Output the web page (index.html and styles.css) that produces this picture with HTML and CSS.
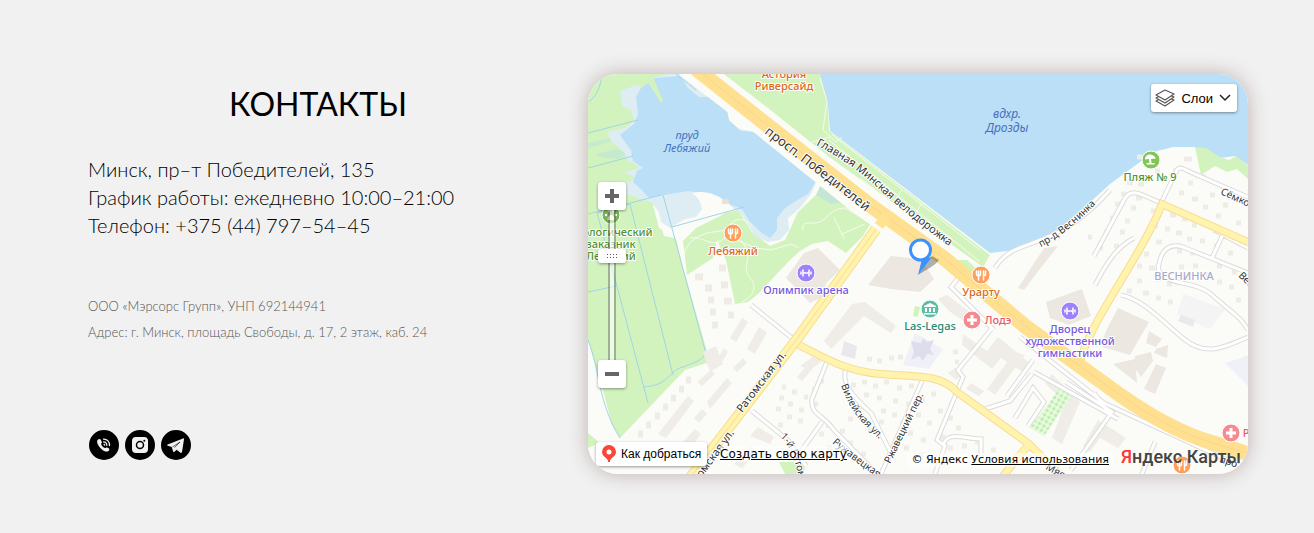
FILE: index.html
```html
<!DOCTYPE html>
<html lang="ru">
<head>
    <meta charset="UTF-8">
    <meta name="viewport" content="width=device-width, initial-scale=1.0">
    <title>Контакты</title>
    <link rel="stylesheet" href="styles.css">
</head>
<body>
    <section class="contacts">
        <div class="info">
            <h1>КОНТАКТЫ</h1>
            <div class="main-text">
                <p>Минск, пр–т Победителей, 135</p>
                <p>График работы: ежедневно 10:00–21:00</p>
                <p>Телефон: +375 (44) 797–54–45</p>
            </div>
            <div class="legal">
                <p>ООО «Мэрсорс Групп», УНП 692144941</p>
                <p>Адрес: г. Минск, площадь Свободы, д. 17, 2 этаж, каб. 24</p>
            </div>
            <div class="social">
                <a href="#phone" aria-label="Телефон">
                    <svg viewBox="0 0 30 30">
                        <path fill="#f1f1f1" d="M9 9.5c1-.8 2.3-.8 2.8.2l1.1 2.2c.3.8-.8 1.3-.8 2.1.2 1.4 2.4 3.8 3.9 4.1.8 0 1.3-1 2.1-.6l1.9 1c.6.5.3 1.9-.5 2.5-1.7 1.2-4.4.4-7.1-2.1C9 15.900 6.800 11.300 9 9.500z"/>
                        <path fill="none" stroke="#f1f1f1" stroke-width="1.300" stroke-linecap="round" d="M14.500 9.200c3.600-.2 6.300 2.600 6 6.300M14.600 11.900c2 0 3.300 1.400 3.200 3.400M15 14.300c.5 0 .7.300.7.700"/>
                    </svg>
                </a>
                <a href="#instagram" aria-label="Instagram">
                    <svg viewBox="0 0 30 30">
                        <rect x="7" y="7" width="16" height="16" rx="4" fill="#f1f1f1"/>
                        <circle cx="15" cy="15" r="3.500" fill="none" stroke="#000" stroke-width="1.500"/>
                        <circle cx="19.300" cy="10.800" r="1" fill="#000"/>
                    </svg>
                </a>
                <a href="#telegram" aria-label="Telegram">
                    <svg viewBox="0 0 30 30">
                        <path fill="#f1f1f1" d="M22 8.400 6.700 14.600c-.7.300-.6.900.1 1.100l3.900 1.200 1.500 4.700c.3.700.8.700 1.300.2l2.100-2.100 4 3c.6.400 1.200.1 1.400-.6L23 9.300c.1-.8-.3-1.200-1-.9z"/>
                        <path fill="none" stroke="#000" stroke-width=".6" d="m11.500 17 7.500-5-5.500 5.600"/>
                    </svg>
                </a>
            </div>
        </div>

        <div class="map">
            <svg class="map-canvas" viewBox="588 74 660 400" preserveAspectRatio="xMidYMid slice">
                <defs>
                    <path id="t-pob" d="M764 133 Q790 153 815 172 T886 228"/>
                    <path id="t-velo" d="M816 145 Q850 162 880 190 T960 254"/>
                    <path id="t-rat" d="M742 413 L800 337"/>
                    <path id="t-rat2" d="M695 487 L752 409"/>
                    <path id="t-vil" d="M841 385 Q850 410 862 422 T890 450"/>
                    <path id="t-rzh" d="M890 464 L928 386"/>
                    <path id="t-ruz" d="M832 443 Q852 460 884 482"/>
                    <path id="t-one" d="M780 437 Q795 450 800 486"/>
                    <path id="t-ves" d="M1041 247 Q1063 237 1100 200"/>
                    <path id="t-sem" d="M1220 194 L1260 212"/>
                    <path id="t-mya" d="M1045 469 L1080 488"/>
                    <pattern id="trees" width="5" height="5" patternUnits="userSpaceOnUse" patternTransform="rotate(30)">
                        <circle cx="2" cy="2" r="1.700" fill="#b9ecab"/>
                    </pattern>
                </defs>
                <rect x="588" y="74" width="660" height="400" fill="#fbfcf7"/>

                <!-- парки -->
                <g fill="#d3f3be">
                    <path d="M588 74H690L700 100 660 198 653 205 659 228 676 239 682 264 710 362 685 370 620 438 612 425 604 394 588 340z"/>
                    <path d="M683 240 700 222 718 214 738 210 752 232 770 246 785 240 798 212 818 193 838 200 871 223 863 236 846 253 828 241 812 244 800 251 790 260 758 294 748 302 735 304 726 260 717 240 713 258 687 275z"/>
                    <path d="M713 74H820L828 105 829 131 990 255 983 267z"/>
                    <path d="M956 260 967 260 990 280 982 282z"/>
                    <path d="M915 306 920 307 918 317 913 316z"/>
                    <path d="M779 462h28l-4 12h-18z"/>
                    <path d="M588 433 600 443 588 448z"/>
                    <path d="M1248 356c-8 0-11 8-8 16l8 12z"/>
                </g>

                <!-- вода -->
                <path fill="#c4ead0" d="m588 143 24-5-2 4-22 6zM596 154l20-5 12 5-10 5-18-2z"/>
                <path fill="#fbfcf7" d="m655 203 5-10 40-4 40 14-20 13-24 12-12 12-20-4z"/>
                <path fill="#deecf3" d="M620 91 636 85 645 88 655 77 668 74H690L698 88 712 97 727 110 730 127 745 130 757 133 768 145 783 147 800 165 818 178 811 194 800 208 788 218 789 230 780 240 768 242 755 236 742 215 727 203 712 198 703 208 696 217 685 219 670 228 661 222 659 212 652 203 635 197 622 193 618 188 636 178 624 172 640 168 627 160 624 152 612 142 607 132 625 128 634 120 631 110 622 106z"/>
                <path fill="#badff6" d="M641 88 655 78 680 76 688 88 699 97 714 97 727 110 729 120 741 131 757 132 764 141 783 150 802 168 816 181 808 194 799 199 785 208 777 218 777 230 770 238 762 233 750 222 742 209 726 203 708 194 688 191 670 194 649 198 641 189 633 182 637 171 643 168 633 161 631 150 625 142 620 135 634 124 638 114 636 97z"/>
                <path fill="#d3f3be" d="m646 79 7-2 10 24-2 2z"/>
                <path fill="#fbfcf7" d="M692 193c12-3 24 0 38 11l-6 8-24 6c4-8 2-18-8-25z"/>
                <path fill="#c4e6d4" d="m820 186 20 8 1 8-10 2-15-9z"/>
                <path fill="#e8e1d6" d="M722 199h7v5h-7z"/>
                <path fill="#badff6" d="M820 74 828 105 830 131 990 253 1008 251 1037 242 1060 228 1085 207 1110 184 1140 162 1157 151 1173 147 1195 147 1220 158 1235 156 1248 165V74z"/>
                <path fill="#d3f3be" d="m1195 147 11 1 14 9 9 3 7-4 12 10v13l-11-10-10 3-12-6-14 9z"/>
                <path class="river" d="M602 74c-1 12-6 24-14 28M588 133l50-13M588 168l45-12M588 214l73-19M597 213l13 47 38 143M597 213l33-9M630 204l43 171M663 195l42 155c1 10-10 12-22 17-14 3-14 19-40 20M588 292l28-6M588 340c12 30 10 63 32 98M672 227l72-20M676 74l20 16"/>

                <!-- дома -->
                <g fill="#ece7e0">
                    <path d="M804 253 818 248 840 270 826 283 824 296 810 303 786 278z"/>
                    <path d="m868 285 23-29 30 3 13 20-14 13-29-3z"/>
                    <path d="M1046 302 1082 289 1091 316 1069 325 1050 318z"/>
                    <path d="m1118 308 31 14-19 33-28-8 3-14z"/>
                    <path d="m1149 331 13 8-6 8-10-4zM1156 349l12-4-1 13-13-5zM1135 356l16-4 2 9-12 16-7-10zM1156 364l10 4-11 26-11-5zM1113 364l22-5 2 24z"/>
                    <path d="m1018 288 26-40 14-2-22 28-12 16z"/>
                </g>
                <g fill="#f0ece8">
                    <path d="m730 338 12-20 6 4-12 20zM747 349l12-22 8 5-12 22zM718 358l6-10 4 4-6 10zM733 368l10-10 4 5-10 9z"/>
                    <path d="m707 402 20-24 5 5-22 26zM658 434l30-38 6 5-28 37zM697 382l14-12 4 4-13 12zM683 442l12-13 6 5-9 12zM694 418l8-9 5 5-8 9z"/>
                    <path d="m750 436 8-9 16 10-4 7zM750 446l-16 18 8 4 14-16zM797 377l12-14 5 4-12 14zM800 366l14-10 8 5-12 9z"/>
                    <path d="m824 341 28-37 13-2 31 24-5 7-27-17-33 33zM938 299l9-4 24 18-4 10-18-12z"/>
                    <path d="m963 334 24 17 11-14 33 27-8 8-22-14-9 11-30-24zM1052 374l28 28-18 42-10-6 13-35-20-20zM1025 355l-30 40-8-6 28-37zM1098 420l28 18-8 10-18-10-10 14-7-6z"/>
                    <path d="m948 373 7-5 8 7-7 5zM971 383l13 8-5 5-13-7zM703 352l13-6 7 18-13 8z"/>
                </g>
                <g fill="#e9e9ed">
                    <path d="m915 333 28 16-14 20-26-4z" fill="#f0f0f8"/>
                    <path d="m911 341 10 2 2-5 4 4 7-2-4 9 4 6-7-1-4 7-4-5-8 4 3-8z" fill="#deddec"/>
                    <path d="m844 341 13 5-2 13-14-4z"/>
                    <path d="m1183 294 42 15-15 20-33-14z" fill="#f4f4f4"/>
                    <path d="m1181 315 14 5-2 7-15-6z"/>
                    <path d="m1225 363 23-7v30z" fill="#f0f0f8"/>
                </g>
                <path class="blocks" d="M695 277h8M705 288h7M708 300h6M710 312h6M712 325h6M719 268h7M721 285h7M724 301h8M728 315h6M686 380h5M679 389h5M671 398h5M663 407h5M655 416h5M646 425h5M638 434h5"/>
                <path class="houses" d="M782 387h4M792 392h5M804 397h4M814 404h4M779 398h5M788 404h5M799 410h5M776 409h5M787 417h5M778 425h5M798 421h5M812 389h5M820 381h4M851 385h5M862 382h5M873 386h5M884 382h5M897 388h5M909 386h5M864 395h5M877 398h5M893 401h5M859 407h5M881 411h5M892 415h5M900 423h5M879 422h5M868 430h5M848 419h5M840 431h5M826 425h5M819 434h5M827 448h5M848 443h5M861 454h5M906 404h5M920 400h5M931 394h5M916 415h5M927 423h5M908 433h5M921 440h5M904 448h5M919 455h5M867 359h5M877 361h5M889 358h5M898 357h5M953 352h5M955 362h4M938 411h5M948 418h5M956 428h5M940 437h5M948 448h5M962 446h5M975 442h5M979 456h5M991 450h5M1009 460h5"/>
                <path class="houses" d="M1137 157h5M1155 171h5M1127 183h6M1138 184h6M1121 194h5M1136 198h6M1131 208h5M1115 204h5M1125 221h5M1110 218h5M1120 232h5M1104 232h5M1114 246h5M1099 248h4M1088 237h4M1184 159h8M1173 171h5M1188 183h5M1201 177h5M1210 195h5M1223 205h5M1179 193h5M1192 199h6M1203 207h5M1216 216h5M1236 223h5M1151 211h5M1170 215h6M1182 219h6M1192 225h5M1153 226h5M1165 229h5M1176 233h6M1187 239h5M1144 239h5M1156 242h6M1144 254h5M1137 266h5M1149 268h6M1137 281h5M1127 291h5M1143 293h6M1156 298h5M1168 302h5M1155 279h6M1167 284h5M1179 267h5M1193 266h5M1206 275h5M1217 282h5M1229 287h5M1236 300h5M1200 241h5M1214 246h5M1228 253h5M1177 251h5M1190 253h5M1217 266h5M1232 272h5"/>

                <!-- тропинки -->
                <path class="paths" d="M684 254c3-11 10-16 20-20s20 0 26-9 16-6 22 1M690 238c14-2 21 10 32 2s18-3 24 8-5 20 4 30 1 21-9 24M736 240l20 8 15 2 20-6 8 4M803 230c-3-12 12-3 20-10s12-12 22-12l18 10M834 217l10 22M842 234l23-10M820 78l7 23-4 29 13 12 6-5M829 140l150 121M832 135l148 115M860 178l45 35M902 190l-15 22M922 203l-14 22M806 144l24-7"/>

                <!-- улицы -->
                <path class="street-edge" d="M751 305l46 37M752 411l37 30 17 25M828 359l-16 40c-2 16 12 16 21 30l44 45M846 368c-5 15 5 27 25 45l20 40M922 381l-41 93M993 327l-35 43 5 7-26 63 8 6-10 28M994 330l-43-43 8-10M943 446c4-16 20-7 38-7v20M985 409l25-8 22-27M799 454l23-32M1020 337l84 66 136 63M1034 372l84 47M1066 382l46 30-41 58M1033 360l-26 36M1028 426l16-24-11-14-18 30M1109 413l-15-20M1155 442l-13 32M1094 256l30-56c5-10 12-8 21-4l16 7 15-31c2-6 7-4 12-1l64 28M1158 276c0-22 8-34 25-29l65 26M1212 258l12-26M1095 285c12-23 21-37 39-47M1121 295c22 4 42 27 63 44s37 10 64-2M1158 264c0 24 35 14 54 31s29 22 36 35M1214 230l34 18M995 268c20-34 57-12 115-78"/>
                <path class="street" d="M751 305l46 37M752 411l37 30 17 25M828 359l-16 40c-2 16 12 16 21 30l44 45M846 368c-5 15 5 27 25 45l20 40M922 381l-41 93M993 327l-35 43 5 7-26 63 8 6-10 28M994 330l-43-43 8-10M943 446c4-16 20-7 38-7v20M985 409l25-8 22-27M799 454l23-32M1020 337l84 66 136 63M1034 372l84 47M1066 382l46 30-41 58M1033 360l-26 36M1028 426l16-24-11-14-18 30M1109 413l-15-20M1155 442l-13 32M1094 256l30-56c5-10 12-8 21-4l16 7 15-31c2-6 7-4 12-1l64 28M1158 276c0-22 8-34 25-29l65 26M1212 258l12-26M1095 285c12-23 21-37 39-47M1121 295c22 4 42 27 63 44s37 10 64-2M1158 264c0 24 35 14 54 31s29 22 36 35M1214 230l34 18M995 268c20-34 57-12 115-78"/>
                <path fill="#e9fae0" d="m1059 389 13 7-28 40-14-8z"/>
                <path fill="url(#trees)" d="m1059 389 13 7-28 40-14-8z"/>

                <path class="road-edge" d="M797 344c28 14 48 27 84 30s60 0 76 18l72 52 34 34M1029 444l-26 32M1080 364c5-36 62-108 82-160l86 38"/>
                <path class="road" d="M797 344c28 14 48 27 84 30s60 0 76 18l72 52 34 34M1029 444l-26 32M1080 364c5-36 62-108 82-160l86 38"/>
                <path class="road-edge wide" d="M884 218 797 339 690 478"/>
                <path class="road wide" d="M884 218 797 339 690 478"/>
                <path class="road-line" d="M884 218 797 339 690 478"/>
                <path fill="none" stroke="#fbfcf7" stroke-width="28" d="M688 64 767 125 860 200 912 237"/>
                <path class="avenue" d="M690 64 767 125 867 203 945 259 1025 326 1077 364 1120 395Q1170 430 1210 442T1254 456"/>
                <path class="avenue-line" d="M690 64 767 125 867 203 945 259 1025 326 1077 364 1120 395Q1170 430 1210 442T1254 456"/>
                <path fill="none" stroke="#ffe391" stroke-width="10" d="m879 226 8-11"/>

                <!-- подписи -->
                <g class="label water">
                    <text x="687" y="139">пруд</text>
                    <text x="687" y="152">Лебяжий</text>
                    <text class="big" x="1007" y="118">вдхр.</text>
                    <text class="big" x="1007" y="132">Дрозды</text>
                </g>
                <g class="label street-name">
                    <text class="large"><textPath href="#t-pob">просп. Победителей</textPath></text>
                    <text><textPath href="#t-velo">Главная Минская велодорожка</textPath></text>
                    <text><textPath href="#t-rat">Ратомская ул.</textPath></text>
                    <text><textPath href="#t-rat2">атомская ул.</textPath></text>
                    <text class="small"><textPath href="#t-vil">Вилейская ул.</textPath></text>
                    <text class="small"><textPath href="#t-rzh">Ржавецкий пер.</textPath></text>
                    <text class="small"><textPath href="#t-ruz">Ружавецкая</textPath></text>
                    <text class="small"><textPath href="#t-one">1-й Ратом</textPath></text>
                    <text class="small"><textPath href="#t-ves">пр-д Веснинка</textPath></text>
                    <text class="small"><textPath href="#t-sem">Сёмко</textPath></text>
                    <text class="small"><textPath href="#t-mya">Мяс</textPath></text>
                    <text class="small" transform="translate(1238 276) rotate(45)">Вес</text>
                    <text class="small" transform="translate(1219 462) rotate(18)">про</text>
                </g>
                <g class="label orange">
                    <text x="784" y="78">Астория</text>
                    <text x="784" y="90">Риверсайд</text>
                    <text x="733" y="255">Лебяжий</text>
                    <text x="981" y="296">Урарту</text>
                </g>
                <g class="label green">
                    <text x="1150" y="181">Пляж № 9</text>
                    <text x="611" y="236">Экологический</text>
                    <text x="611" y="248">заказник</text>
                    <text x="611" y="260">Лебяжий</text>
                </g>
                <g class="label purple">
                    <text x="806" y="294">Олимпик арена</text>
                    <text x="1070" y="333">Дворец</text>
                    <text x="1070" y="345">художественной</text>
                    <text x="1070" y="357">гимнастики</text>
                </g>
                <text class="label teal" x="930" y="330">Las-Legas</text>
                <text class="label red" x="998" y="324">Лодэ</text>
                <text class="label red" x="1246" y="437">Р</text>
                <text class="label district" x="1184" y="280">ВЕСНИНКА</text>

                <!-- значки мест -->
                <g class="poi">
                    <circle cx="733" cy="233" r="9" fill="#ff9f5a"/>
                    <circle cx="981" cy="275" r="9" fill="#ff9f5a"/>
                    <circle cx="1182" cy="465" r="9" fill="#ff9f5a"/>
                    <circle cx="806" cy="273" r="9" fill="#9d82fa"/>
                    <circle cx="1070" cy="311" r="9" fill="#9d82fa"/>
                    <circle cx="930" cy="309" r="9" fill="#5dbda5"/>
                    <circle cx="972" cy="320" r="9" fill="#f58a90"/>
                    <circle cx="1231" cy="433" r="9" fill="#f58a90"/>
                    <circle cx="1151" cy="160" r="9" fill="#82c456"/>
                    <circle cx="611" cy="215" r="9" fill="#76b454"/>
                </g>
                <g fill="none" stroke="#fff" stroke-width="1.500" stroke-linecap="round">
                    <path id="fork" d="M728.500 229v3q0 2 2 2t2-2v-3M730.500 229v9M735.500 229v9M737.500 229v4l-2 1"/>
                    <use href="#fork" x="248" y="42"/>
                    <use href="#fork" x="449" y="232"/>
                    <path id="gym" d="M803 270v6M809 270v6M801 272v2M811 272v2M804 273h4"/>
                    <use href="#gym" x="264" y="38"/>
                </g>
                <path fill="#fff" d="M970.500 315h3v3.500h3.500v3h-3.500v3.500h-3v-3.500h-3.500v-3h3.500zM1229.500 428h3v3.500h3.500v3h-3.500v3.500h-3v-3.500h-3.500v-3h3.500z"/>
                <path fill="#fff" d="m930 303 6 3v1h-12v-1zM925 308h2v4h-2zM929 308h2v4h-2zM933 308h2v4h-2zM924 313h12v1.500h-12z"/>
                <path fill="#fff" d="M1145 159.500c0-6 8-7 11-1l-5 .5.500 4h3v1.500h-8V163h3l-.5-4z"/>
                <path fill="#fff" d="M611 215c2 0 4 3 3 5h-6c-1-2 1-5 3-5z"/>
                <g fill="#fff"><circle cx="606" cy="215" r="1.200"/><circle cx="609" cy="211" r="1.300"/><circle cx="613" cy="211" r="1.300"/><circle cx="616" cy="215" r="1.200"/></g>

                <!-- метка -->
                <path fill="#000" opacity=".3" d="m918 275 14-19 7 4c-4 6-12 9-21 15z"/>
                <path fill="#3b92ff" d="m922 259-4 16 14-18z"/>
                <circle cx="920.500" cy="250" r="10" fill="#fff" stroke="#3b92ff" stroke-width="3"/>
            </svg>

            <button class="layers" type="button">
                <svg viewBox="0 0 20 18" width="20" height="18">
                    <g fill="#fff" stroke="#555" stroke-width="1.200" stroke-linejoin="round">
                        <path d="m1 12 9-5 9 4-9 6z"/>
                        <path d="m1 9 9-5 9 4-9 6z"/>
                        <path d="m1 6 9-5 9 4-9 6z"/>
                    </g>
                </svg>
                Слои
                <svg viewBox="0 0 12 8" width="12" height="8"><path fill="none" stroke="#222" stroke-width="1.500" d="m1 1 5 5 5-5"/></svg>
            </button>

            <div class="zoom">
                <button type="button" aria-label="Приблизить"><svg viewBox="0 0 14 14" width="14" height="14"><path fill="#666" d="M5 0h4v5h5v4H9v5H5V9H0V5h5z"/></svg></button>
                <input type="range" aria-label="Масштаб" min="0" max="100" value="29">
                <button type="button" aria-label="Отдалить"><svg viewBox="0 0 14 14" width="14" height="14"><path fill="#666" d="M0 5h14v4H0z"/></svg></button>
            </div>

            <button class="route" type="button">
                <svg viewBox="0 0 14 18" width="14" height="18"><path fill="#fa4639" d="M7 0a7 7 0 0 0-7 7c0 4 4 5 6 8.500V17h2v-1.500C10 12 14 11 14 7a7 7 0 0 0-7-7z"/><circle cx="7" cy="7" r="2.500" fill="#fff"/></svg>
                Как добраться
            </button>
            <a class="create" href="#constructor">Создать свою карту</a>
            <div class="copyright">
                <span class="terms">© Яндекс <a href="#terms">Условия использования</a></span>
                <a class="logo" href="#maps"><span>Я</span>ндекс Карты</a>
            </div>
        </div>
    </section>
</body>
</html>
```
FILE: styles.css
```css
* {
    box-sizing: border-box;
}
body {
    margin: 0;
    background-color: #f1f1f1;
    color: #000;
    font-family: Lato, "Open Sans", sans-serif;
}
.contacts {
    display: grid;
    grid-template-columns: minmax(0, 460fr) minmax(0, 660fr);
    gap: 40px;
    padding: 74px 66px 59px 88px;
}
.info {
    display: flex;
    flex-direction: column;
    padding-top: 8px;
}
h1 {
    margin: 0;
    font-size: 32px;
    line-height: 44px;
    font-weight: 400;
    text-align: center;
}
p {
    margin: 0;
}
.main-text {
    margin-top: 29px;
    font-size: 20px;
    line-height: 28px;
    font-weight: 300;
}
.legal {
    margin-top: 54px;
    font-size: 13px;
    line-height: 26px;
    font-weight: 300;
    color: #555;
}
.social {
    display: flex;
    gap: 6px;
    margin-top: auto;
    padding: 0 1px 14px;
}
.social a {
    width: 30px;
    height: 30px;
    border-radius: 50%;
    background-color: #000;
}
.social svg {
    display: block;
}

/* карта */
.map {
    position: relative;
    aspect-ratio: 660 / 400;
    border-radius: 30px;
    overflow: hidden;
    box-shadow: 0 0 20px rgba(80, 30, 30, 0.3);
}
.map-canvas {
    display: block;
    width: 100%;
    height: 100%;
}
.river {
    fill: none;
    stroke: #a0d4e8;
    stroke-width: 1;
}
.blocks {
    fill: none;
    stroke: #efebe6;
    stroke-width: 7;
}
.houses {
    fill: none;
    stroke: #efebe6;
    stroke-width: 5;
}
.paths {
    fill: none;
    stroke: #f5fbe9;
    stroke-width: 1;
}
.street-edge {
    fill: none;
    stroke: #dcdcdc;
    stroke-width: 5;
}
.street {
    fill: none;
    stroke: #fff;
    stroke-width: 3;
}
.road-edge {
    fill: none;
    stroke: #f7dc92;
    stroke-width: 8;
}
.road {
    fill: none;
    stroke: #fff3ae;
    stroke-width: 6;
}
.road-edge.wide {
    stroke-width: 11;
}
.road.wide {
    stroke-width: 9;
}
.road-line {
    fill: none;
    stroke: #f5dc92;
    stroke-width: 1;
}
.avenue {
    fill: none;
    stroke: #ffe091;
    stroke-width: 15;
}
.avenue-line {
    fill: none;
    stroke: #f8d488;
    stroke-width: 1;
}
.label {
    font-family: "Noto Sans", sans-serif;
    font-size: 11px;
    font-weight: 500;
    text-anchor: middle;
    paint-order: stroke;
    stroke: #fff;
    stroke-width: 2px;
    stroke-linejoin: round;
}
.water {
    fill: #4a70c0;
    stroke: none;
    font-style: italic;
    font-weight: 400;
}
.label .big {
    font-size: 12px;
}
.label .large {
    font-size: 13px;
}
.street-name {
    fill: #333;
    font-weight: 400;
    text-anchor: start;
}
.label .small {
    font-size: 10px;
}
.orange {
    fill: #d9691c;
}
.green {
    fill: #4f9232;
}
.purple {
    fill: #7558e0;
}
.teal {
    fill: #238b73;
}
.red {
    fill: #e85868;
}
.district {
    fill: #a9a9c9;
}
.poi circle {
    stroke: #fff;
    stroke-width: 1;
}

/* элементы управления */
.map button {
    display: flex;
    align-items: center;
    justify-content: center;
    padding: 0;
    border: none;
    border-radius: 3px;
    background-color: #fff;
    color: #000;
    font-family: "Liberation Sans", Arial, sans-serif;
    box-shadow: 0 1px 3px rgba(0, 0, 0, 0.4);
    cursor: pointer;
}
.map .layers {
    position: absolute;
    top: 10px;
    right: 11px;
    gap: 6px;
    height: 28px;
    padding: 0 6px 0 4px;
    font-size: 13px;
}
.zoom {
    position: absolute;
    top: 108px;
    left: 10px;
    display: flex;
    flex-direction: column;
    width: 28px;
}
.zoom button {
    height: 28px;
    z-index: 1;
}
.zoom input {
    appearance: none;
    writing-mode: vertical-lr;
    width: 28px;
    height: 150px;
    margin: 0;
    background: linear-gradient(90deg, rgba(80, 80, 80, 0.4) 2px, rgba(255, 255, 255, 0.6) 2px 6px, rgba(80, 80, 80, 0.4) 6px) center / 8px 100% no-repeat;
}
.zoom input::-webkit-slider-thumb {
    appearance: none;
    box-sizing: border-box;
    width: 28px;
    height: 14px;
    padding: 4px 8px;
    border-radius: 3px;
    background: radial-gradient(circle, #555 30%, transparent 40%) 0 0 / 3px 3px content-box, linear-gradient(#fff, #fff) border-box;
    box-shadow: 0 1px 3px rgba(0, 0, 0, 0.4);
}
.map .route {
    position: absolute;
    left: 8px;
    bottom: 8px;
    gap: 5px;
    height: 24px;
    padding: 0 6px;
    font-size: 12px;
}
.map a {
    color: #000;
}
.create {
    position: absolute;
    left: 132px;
    bottom: 12px;
    font: 12px/16px "DejaVu Sans", Verdana, sans-serif;
    background-color: rgba(255, 255, 255, 0.6);
}
.copyright {
    position: absolute;
    right: 7px;
    bottom: 5px;
    display: flex;
    align-items: baseline;
    gap: 8px;
}
.terms {
    padding: 0 4px;
    font: 11px/14px "DejaVu Sans", Verdana, sans-serif;
    background-color: rgba(255, 255, 255, 0.6);
}
.map .logo {
    font: 500 18px/24px Roboto, sans-serif;
    color: #444;
    text-decoration: none;
}
.logo span {
    color: #f33;
}
```
